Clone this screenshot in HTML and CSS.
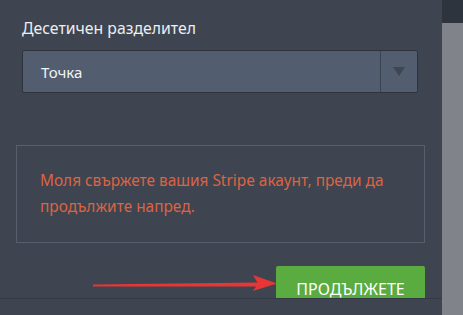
FILE: index.html
```html
<!DOCTYPE html>
<html lang="bg">
<head>
<meta charset="utf-8">
<link rel="stylesheet" href="styles.css">
</head>
<body>
<div class="page">
  <div class="main">
    <div class="content">
      <div class="field">
        <div class="label">Десетичен разделител</div>
        <div class="select">
          <span class="select-value">Точка</span>
          <span class="select-toggle"><span class="caret"></span></span>
        </div>
      </div>
      <div class="notice">Моля свържете вашия Stripe акаунт, преди да продължите напред.</div>
      <div class="actions">
        <button class="btn-continue">ПРОДЪЛЖЕТЕ</button>
      </div>
      <svg class="annotation" width="200" height="24" viewBox="0 0 200 24">
        <polygon points="0,9.5 165,7.5 165,11.5 0,11.5" fill="#e83535"/>
        <polygon points="160,0 184,8.5 160,16 165,8.5" fill="#e83535"/>
      </svg>
    </div>
  </div>
  <div class="scrollbar">
    <div class="scroll-top"></div>
    <div class="scroll-track"></div>
  </div>
</div>
</body>
</html>
```

FILE: styles.css
```css
html, body {
  margin: 0;
  padding: 0;
  background: #3e4550;
  font-family: "Noto Sans", "Open Sans", sans-serif;
}
.page {
  display: flex;
  height: 315px;
  width: 463px;
}
.main {
  width: 442px;
  flex: none;
}
.content {
  position: relative;
  height: 299px;
  overflow: hidden;
  border-bottom: 1px solid #343a44;
  padding-left: 16px;
  box-sizing: border-box;
}
.field {
  padding: 17px 0 0 6px;
  width: 396px;
}
.label {
  color: #eceef0;
  font-size: 15.8px;
  line-height: 22px;
}
.select {
  margin-top: 11px;
  height: 43px;
  box-sizing: border-box;
  background: #525d6f;
  border: 1px solid #2e343d;
  border-radius: 2px;
  display: flex;
  align-items: center;
}
.select-value {
  flex: 1;
  padding-left: 18px;
  color: #f2f3f5;
  font-size: 15px;
}
.select-toggle {
  width: 36px;
  align-self: stretch;
  border-left: 1px solid #3c4350;
  display: flex;
  align-items: center;
  justify-content: center;
}
.caret {
  width: 0;
  height: 0;
  border-left: 6px solid transparent;
  border-right: 6px solid transparent;
  border-top: 9px solid #3f4652;
}
.notice {
  margin-top: 52px;
  width: 409px;
  height: 98px;
  box-sizing: border-box;
  border: 1px solid #56606d;
  padding: 22px 12px 0 23px;
  color: #dc6343;
  font-size: 15.4px;
  line-height: 26px;
}
.actions {
  width: 409px;
  display: flex;
  justify-content: flex-end;
  margin-top: 23px;
}
.btn-continue {
  width: 149px;
  height: 42px;
  background: #5aac40;
  color: #ffffff;
  border: none;
  border-radius: 2px 2px 0 0;
  font-family: "Noto Sans", "Open Sans", sans-serif;
  font-size: 16px;
  padding: 4px 0 0;
  margin: 0;
}
.annotation {
  position: absolute;
  left: 93px;
  top: 275px;
}
.scrollbar {
  width: 21px;
  flex: none;
  display: flex;
  flex-direction: column;
}
.scroll-top {
  height: 23px;
  background: #2d343e;
}
.scroll-track {
  flex: 1;
  background: #81838a;
}
```
